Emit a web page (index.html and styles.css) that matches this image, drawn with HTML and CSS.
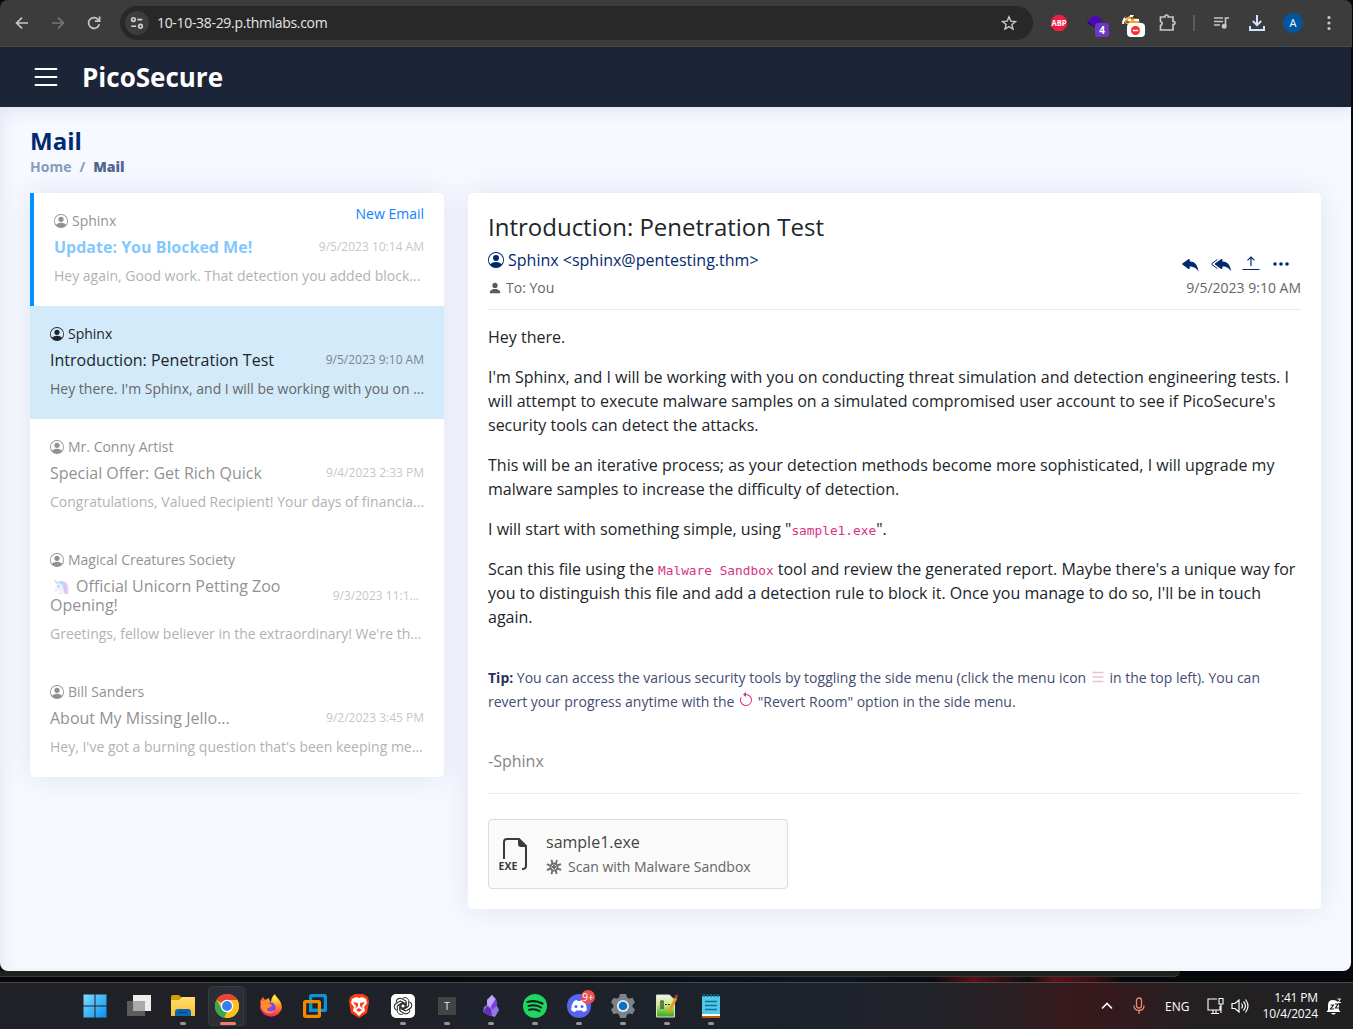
FILE: index.html
```html
<!DOCTYPE html>
<html lang="en">
<head>
<meta charset="utf-8">
<title>PicoSecure - Mail</title>
<link rel="stylesheet" href="styles.css">
</head>
<body>
<svg class="defs" aria-hidden="true">
  <symbol id="person-circle" viewBox="0 0 16 16"><path d="M11 6a3 3 0 1 1-6 0 3 3 0 0 1 6 0z"/><path fill-rule="evenodd" d="M0 8a8 8 0 1 1 16 0A8 8 0 0 1 0 8zm8-7a7 7 0 0 0-5.468 11.37C3.242 11.226 4.805 10 8 10s4.757 1.225 5.468 2.37A7 7 0 0 0 8 1z"/></symbol>
  <symbol id="person" viewBox="0 0 16 16"><path d="M3 14s-1 0-1-1 1-4 6-4 6 3 6 4-1 1-1 1H3zm5-6a3 3 0 1 0 0-6 3 3 0 0 0 0 6z"/></symbol>
  <linearGradient id="winblue" x1="0" y1="0" x2="1" y2="1"><stop offset="0" stop-color="#7ddcff"/><stop offset="1" stop-color="#0a8fee"/></linearGradient>
  <linearGradient id="fold" x1="0" y1="0" x2="0" y2="1"><stop offset="0" stop-color="#ffdf70"/><stop offset="1" stop-color="#fbbf2d"/></linearGradient>
  <radialGradient id="fox" cx=".7" cy=".15" r=".95"><stop offset="0" stop-color="#fff04a"/><stop offset=".4" stop-color="#ff9a28"/><stop offset=".75" stop-color="#ff4050"/><stop offset="1" stop-color="#e5198b"/></radialGradient>
  <linearGradient id="green" x1="0" y1="0" x2="0" y2="1"><stop offset="0" stop-color="#f4f8ed"/><stop offset=".45" stop-color="#c5e97a"/><stop offset="1" stop-color="#35a812"/></linearGradient>
</svg>

<header class="browser">
  <div class="nav">
    <span><svg width="16" height="16" viewBox="0 0 16 16" fill="none" stroke="#c7c7c7" stroke-width="1.7"><path d="M14 8H3M8 2.6 2.6 8 8 13.4"/></svg></span>
    <span><svg width="16" height="16" viewBox="0 0 16 16" fill="none" stroke="#757575" stroke-width="1.7"><path d="M2 8h11M8 2.6 13.4 8 8 13.4"/></svg></span>
    <span><svg width="16" height="16" viewBox="0 0 16 16" fill="none" stroke="#c7c7c7" stroke-width="1.7"><path d="M13.3 9.1A5.4 5.4 0 1 1 12 4.3l1.3 1.5"/><path d="M13.6 1.6v4.6H9"/></svg></span>
  </div>
  <div class="address">
    <span class="site"><svg width="16" height="16" viewBox="0 0 16 16" fill="none" stroke="#d2d2d2" stroke-width="1.6"><circle cx="4.4" cy="4.6" r="1.8"/><path d="M8.3 4.6h5M2.2 11.2h5"/><circle cx="11.5" cy="11.2" r="1.8"/></svg></span>
    <span class="url">10-10-38-29.p.thmlabs.com</span>
    <svg class="star" width="16" height="16" viewBox="0 0 16 16" fill="none" stroke="#c7c7c7" stroke-width="1.4"><path d="m8 1.8 1.8 4.3 4.7.4-3.6 3 1.1 4.6-4-2.5-4 2.5 1.1-4.6-3.6-3 4.7-.4z"/></svg>
  </div>
  <div class="tools">
    <span><svg width="18" height="18" viewBox="0 0 18 18"><path fill="#ed1e45" d="M5.500 1h7L17 5.500v7L12.500 17h-7L1 12.500v-7z"/><text class="abp" x="9" y="12" text-anchor="middle" textLength="15" lengthAdjust="spacingAndGlyphs">ABP</text></svg></span>
    <span><svg width="28" height="28" viewBox="0 0 28 28"><path fill="#210a70" d="m6 14 6-3 9 5-3 5z"/><path fill="#4b09b5" d="m14 6 8 5-8 7-8-6z"/><rect x="14" y="14" width="14" height="14" rx="3" fill="#6c37c2"/><text class="badge-num" x="21" y="25" text-anchor="middle">4</text></svg></span>
    <span><svg width="28" height="28" viewBox="0 0 28 28"><path fill="#f1a43a" d="M7 12q6-10 15-1l1 4H9z"/><path fill="none" stroke="#fff" stroke-width="2" d="M6 15q0-5 4-7m3-1h4m-6 4h3m3 0h5"/><path fill="none" stroke="#242424" stroke-width="1.200" d="M8 9l3-2m5 0 4 2M9 13h3m2-4h5"/><rect x="10" y="14" width="18" height="14" rx="4" fill="#fff"/><circle cx="18.500" cy="21.500" r="4.500" fill="#f92f2f"/><path stroke="#fff" stroke-width="1.500" d="M15.800 21.500h5.400"/></svg></span>
    <span><svg width="20" height="20" viewBox="0 0 20 20" fill="none" stroke="#c7c7c7" stroke-width="1.700"><path d="M3.500 4H8V3q1.600-2 3.200 0v1H16v4.500h1q2 1.500 0 3h-1V17H3.500v-4.500q3.400-2 0-4z"/></svg></span>
    <i></i>
    <span><svg width="18" height="18" viewBox="0 0 18 18" fill="none" stroke="#c7c7c7" stroke-width="1.600"><path d="M2 4h9M2 7.500h9M2 11h6M13.500 12V4H17"/><circle cx="12.200" cy="12.300" r="1.700" fill="#c7c7c7"/></svg></span>
    <span><svg width="18" height="18" viewBox="0 0 18 18" fill="none" stroke="#d3e3fd" stroke-width="2"><path d="M9 1v10M4.800 7 9 11.200 13.200 7M2 12v4h14v-4"/></svg></span>
    <span><b class="avatar">A</b></span>
    <span><svg width="4" height="16" viewBox="0 0 4 16" fill="#c7c7c7"><circle cx="2" cy="2.500" r="1.600"/><circle cx="2" cy="8" r="1.600"/><circle cx="2" cy="13.500" r="1.600"/></svg></span>
  </div>
</header>

<div class="page">
  <div class="brand">
    <svg width="24" height="20" viewBox="0 0 24 20" fill="none" stroke="#fff" stroke-width="1.900" stroke-linecap="round"><path d="M1.500 2h21M1.500 10h21M1.500 18h21"/></svg>
    <span>PicoSecure</span>
  </div>
  <main>
    <h1>Mail</h1>
    <div class="crumbs"><span>Home</span><span>/</span><b>Mail</b></div>
    <div class="columns">
      <section class="card inbox">
        <article class="mail fresh">
          <em>New Email</em>
          <div class="dim">
            <p class="sender"><svg><use href="#person-circle"/></svg>Sphinx</p>
            <div class="subject"><h3>Update: You Blocked Me!</h3><time>9/5/2023 10:14 AM</time></div>
            <p class="preview">Hey again, Good work. That detection you added block...</p>
          </div>
        </article>
        <article class="mail active">
          <p class="sender"><svg><use href="#person-circle"/></svg>Sphinx</p>
          <div class="subject"><h3>Introduction: Penetration Test</h3><time>9/5/2023 9:10 AM</time></div>
          <p class="preview">Hey there. I'm Sphinx, and I will be working with you on ...</p>
        </article>
        <article class="mail"><div class="dim">
          <p class="sender"><svg><use href="#person-circle"/></svg>Mr. Conny Artist</p>
          <div class="subject"><h3>Special Offer: Get Rich Quick</h3><time>9/4/2023 2:33 PM</time></div>
          <p class="preview">Congratulations, Valued Recipient! Your days of financia...</p>
        </div></article>
        <article class="mail"><div class="dim">
          <p class="sender"><svg><use href="#person-circle"/></svg>Magical Creatures Society</p>
          <div class="subject"><h3><svg class="unicorn" viewBox="0 0 16 16"><path fill="#f3a8e7" d="M6 3c6-3 9 2 9.500 5v7H10z"/><path fill="#c87af0" d="M8 2c5 0 6 5 6 13h-3z"/><path fill="#72b7f5" d="M5 3c5-3 7 2 7 6v4H8z"/><path fill="#e9dcfa" d="M4 5c4-2 6 1 6 4l2 6H5l2-4-4 2-2-2z"/><path fill="#47c5d5" d="m1 0 4 4-2 1z"/><circle cx="5.500" cy="7" r=".8" fill="#354060"/></svg>Official Unicorn Petting Zoo<br>Opening!</h3><time class="clipped">9/3/2023 11:1...</time></div>
          <p class="preview">Greetings, fellow believer in the extraordinary! We're th...</p>
        </div></article>
        <article class="mail"><div class="dim">
          <p class="sender"><svg><use href="#person-circle"/></svg>Bill Sanders</p>
          <div class="subject"><h3>About My Missing Jello...</h3><time>9/2/2023 3:45 PM</time></div>
          <p class="preview">Hey, I've got a burning question that's been keeping me...</p>
        </div></article>
      </section>

      <section class="card reader">
        <h2>Introduction: Penetration Test</h2>
        <div class="meta">
          <div>
            <p class="from"><svg><use href="#person-circle"/></svg>Sphinx &lt;sphinx@pentesting.thm&gt;</p>
            <p class="to"><svg><use href="#person"/></svg>To: You</p>
          </div>
          <div class="right">
            <div class="actions">
              <svg viewBox="0 0 16 16"><path d="M5.921 11.900 1.353 8.620a.719.719 0 0 1 0-1.238L5.921 4.100A.716.716 0 0 1 7 4.719V6c1.500 0 6 0 7 8-2.500-4.500-7-4-7-4v1.281c0 .560-.606.898-1.079.620z"/></svg>
              <svg viewBox="0 0 16 16"><path d="M8.021 11.900 3.453 8.620a.719.719 0 0 1 0-1.238L8.021 4.100a.716.716 0 0 1 1.079.619V6c1.500 0 6 0 7 8-2.500-4.500-7-4-7-4v1.281c0 .560-.606.898-1.079.620z"/><path fill="none" stroke="#012970" stroke-width=".8" stroke-linecap="round" d="M4.830 4.600.8 7.560q-.5.500 0 .960l4.030 2.950"/></svg>
              <svg viewBox="0 0 20 20" fill="none" stroke="#012970" stroke-width="1.200"><path d="M1.500 15.500h17M10 12V3M6.500 6.400 10 3l3.500 3.400"/></svg>
              <svg viewBox="0 0 20 20"><circle cx="4" cy="10" r="1.800"/><circle cx="10" cy="10" r="1.800"/><circle cx="16" cy="10" r="1.800"/></svg>
            </div>
            <time>9/5/2023 9:10 AM</time>
          </div>
        </div>
        <div class="body">
          <p>Hey there.</p>
          <p>I'm Sphinx, and I will be working with you on conducting threat simulation and detection engineering tests. I<br>will attempt to execute malware samples on a simulated compromised user account to see if PicoSecure's<br>security tools can detect the attacks.</p>
          <p>This will be an iterative process; as your detection methods become more sophisticated, I will upgrade my<br>malware samples to increase the difficulty of detection.</p>
          <p>I will start with something simple, using "<code>sample1.exe</code>".</p>
          <p>Scan this file using the <code>Malware Sandbox</code> tool and review the generated report. Maybe there's a unique way for<br>you to distinguish this file and add a detection rule to block it. Once you manage to do so, I'll be in touch<br>again.</p>
          <p class="tip"><b>Tip:</b> You can access the various security tools by toggling the side menu (click the menu icon <svg width="16" height="14" viewBox="0 0 16 14" stroke="#e9c3c9" stroke-width="1.700"><path d="M2.500 2.500h11M2.500 7h11M2.500 11.500h11"/></svg> in the top left). You can<br>revert your progress anytime with the <svg width="16" height="16" viewBox="0 0 16 16" fill="#d63384"><path d="M8 3a5 5 0 1 1-4.546 2.914.5.5 0 0 0-.908-.417A6 6 0 1 0 8 2v1z"/><path d="M8 4.466V.534a.25.25 0 0 0-.41-.192L5.230 2.308a.25.25 0 0 0 0 .384l2.360 1.966A.25.25 0 0 0 8 4.466z"/></svg> "Revert Room" option in the side menu.</p>
          <p class="sign">-Sphinx</p>
        </div>
        <div class="attachment">
          <svg class="exe" width="32" height="36" viewBox="0 0 32 36"><path fill="none" stroke="#3b3b3b" stroke-width="2" d="M6 24V7q0-3 3-3h12l7 7v20q0 3-4 3.200"/><path fill="#3b3b3b" d="M20 3v6q0 3 3 3h6z"/><text x="10" y="35" text-anchor="middle">EXE</text></svg>
          <div>
            <p class="file">sample1.exe</p>
            <p class="scan"><svg width="16" height="16" viewBox="0 0 16 16" fill="none" stroke="#707070" stroke-width="1.900"><circle cx="8" cy="8" r="3.500"/><path d="M6.500 5 5.500.8M9.800 5 11 1M5 7 .8 5.200M5 9.500 1 11M11 6.500l4-1.300M11 9.500l4.200 1.300M6.500 11l-1 4.200M9.500 11l1.200 4M8 6v4M6 8h4"/></svg>Scan with Malware Sandbox</p>
          </div>
        </div>
      </section>
    </div>
  </main>
</div>
<div class="wallpaper"><div></div></div>

<footer class="taskbar">
  <div class="apps">
    <span><svg viewBox="0 0 24 24" fill="url(#winblue)"><path d="M.500.500h11v11H.500zM12.500.500h11v11h-11zM.500 12.500h11v11H.500zM12.500 12.500h11v11h-11z"/></svg></span>
    <span><svg viewBox="0 0 24 24"><path fill="#ededed" d="M6 1h18v16H6z"/><path fill="#5c5c5c" d="M0 7h18v15H0z"/><path fill="#aaa" d="M6 7h12v10H6z"/></svg></span>
    <span class="run"><svg viewBox="0 0 24 24"><path fill="#d99a08" d="M0 3q0-2 2-2h6l3 3v4H0z"/><path fill="url(#fold)" d="M0 6h8l3-3h13v19H0z"/><path fill="#0a66b3" d="M4 22v-4q0-3 3-3h10q3 0 3 3v4z"/><path stroke="#064a83" stroke-width="1.500" d="M8 18.500h8"/></svg></span>
    <span class="current"><svg viewBox="0 0 24 24"><circle cx="12" cy="12" r="12" fill="#fbc116"/><path fill="#ea4335" d="M12 12 1.600 6A12 12 0 0 1 22.400 6H12z"/><path fill="#34a853" d="M1.600 6 7 15l5 3-3 5.600A12 12 0 0 1 1.600 6z"/><path fill="#fbc116" d="M12 6h10.400A12 12 0 0 1 12 24l5-9z"/><circle cx="12" cy="12" r="6.300" fill="#fff"/><circle cx="12" cy="12" r="4.900" fill="#397df0"/></svg></span>
    <span><svg viewBox="0 0 24 24"><path fill="url(#fox)" d="M1 7 4 3l2 3 4-2c0 3 2 4 2 4s0-5 4-8c1 4 7 6 7 14a11.300 11.300 0 0 1-22 0c0-3 1-4 0-7z"/><circle cx="11.500" cy="13.500" r="5.200" fill="#8146e8"/><path fill="#ff8b2b" d="M2 7c5 0 7 2 11 4-1 3-4 2-5 4 0 3 5 3 8 1-3 6-13 4-14-4z"/></svg></span>
    <span><svg viewBox="0 0 24 24" fill="none" stroke-width="3.200"><rect x="7.600" y="1.600" width="14.800" height="14.800" rx="1" stroke="#0795d8"/><rect x="1.600" y="7.600" width="14.800" height="14.800" rx="1" stroke="#f38b00"/><path stroke="#0795d8" d="M7.600 9v7.400H15"/></svg></span>
    <span><svg viewBox="0 0 24 24"><path fill="#fa3d14" d="m8 0-5 3-1 5 2 11 8 5 8-5 2-11-1-5-5-3z"/><path fill="#fff" d="m9 3-4 2-1 4 3 4-1 4 3 2 3 3 3-3 3-2-1-4 3-4-1-4-4-2-3 1z"/><path fill="#fa3d14" d="m6 8 5 1v3l-3 3 1-3zM18 8l-5 1v3l3 3-1-3zM9 16l3-2 3 2-3 2z"/></svg></span>
    <span class="run"><svg viewBox="0 0 24 24"><rect width="24" height="24" rx="5" fill="#fff"/><g fill="none" stroke="#222" stroke-width="1"><path id="petal" d="M11.500 4.400c3-2 6.500 0 6.200 3.300v4.400l-3.700 2.200V9.500L9.600 7"/><use href="#petal" transform="rotate(60 12 12)"/><use href="#petal" transform="rotate(120 12 12)"/><use href="#petal" transform="rotate(180 12 12)"/><use href="#petal" transform="rotate(240 12 12)"/><use href="#petal" transform="rotate(300 12 12)"/></g></svg></span>
    <span class="run"><b class="typora">T</b></span>
    <span class="run"><svg viewBox="0 0 24 24"><path fill="#9974e8" d="m13 1 4 4 1 7 2 4-4 7-7-2-5-3 1-5 3-2V6z"/><path fill="#c3a6fb" d="m13 1 3 4-4 8-4-2V6z"/><path fill="#6130b7" d="m8 12 4 3 1 7-4-1-5-3z"/><path fill="#7544d8" d="m17 5 1 7-5 4-1-4z"/></svg></span>
    <span class="run"><svg viewBox="0 0 24 24"><circle cx="12" cy="12" r="12" fill="#1ed760"/><path fill="none" stroke="#17201c" stroke-linecap="round" stroke-width="2.300" d="M4.500 8Q12 5.500 19.500 9.500"/><path fill="none" stroke="#17201c" stroke-linecap="round" stroke-width="2" d="M5.500 12q7-2 12.500 1.500M6 15.800q6-1.600 10.500 1.400"/></svg></span>
    <span class="run discord"><svg viewBox="0 0 24 24"><circle cx="12" cy="12" r="12" fill="#5865f2"/><path fill="#fff" d="M7 7q2-1 3-1l.5 1h3l.5-1q2 0 3 1 3 4 3 9-2 2-4 2l-1-1.500H9L8 18q-2 0-4-2 0-5 3-9z"/><circle cx="9" cy="12.500" r="1.500" fill="#5865f2"/><circle cx="15" cy="12.500" r="1.500" fill="#5865f2"/></svg><em>9+</em></span>
    <span class="run"><svg viewBox="0 0 24 24"><path fill="#7c838a" d="M9 0h6l.9 3.300 2.300 1.400 3.300-.9 2.500 4.700L21.500 11v2l2.500 2.500-2.500 4.700-3.300-.9-2.300 1.400L15 24H9l-.9-3.300-2.300-1.400-3.300.9L0 15.500 2.500 13v-2L0 8.500l2.500-4.700 3.300.9 2.300-1.400z"/><circle cx="12" cy="12" r="6" fill="#e8eef2"/><circle cx="12" cy="12" r="4.300" fill="#0872c4"/></svg></span>
    <span class="run"><svg viewBox="0 0 24 24"><path fill="url(#green)" stroke="#ddd" d="M1.500 1h13l5 5v17h-18z"/><path fill="none" stroke="#333" stroke-width="1.200" d="M6 15V7h2v8M10 10.500h2m1 0h2"/><path stroke="#e89b20" stroke-width="2.800" d="m14 18 7-14"/><path stroke="#a33b35" stroke-width="2.800" d="m20.500 4 1.500-3"/></svg></span>
    <span class="run"><svg viewBox="0 0 24 24"><path fill="#55c7e8" d="M3 2h18v20H3z"/><path fill="#fff" d="M3 20h18v2H3z"/><path fill="#bd5917" d="M3 22h18v2H3z"/><path fill="none" stroke="#09739b" stroke-width="1.600" d="M6 7.500h12M6 11.500h12M6 15.500h12M5 0v3m3.500-3v3M12 0v3m3.500-3v3M19 0v3"/></svg></span>
  </div>
  <div class="tray">
    <svg class="chev" width="12" height="8" viewBox="0 0 12 8" fill="none" stroke="#fff" stroke-width="1.600"><path d="m1 6.500 5-5 5 5"/></svg>
    <svg class="mic" width="12" height="18" viewBox="0 0 12 18" fill="none" stroke="#e58b67" stroke-width="1.300"><rect x="3.500" y="1" width="5" height="10" rx="2.500"/><path d="M1 8.500q0 5 5 5t5-5M6 13.500V17"/></svg>
    <span class="lang">ENG</span>
    <svg class="net" width="17" height="18" viewBox="0 0 17 18" fill="none" stroke="#fff" stroke-width="1.100"><path d="M10 2H1v11h12V9M4 16.500h8M6 13v3M9 13v3M12 1.500h4V7h-4zM14 7v9"/></svg>
    <svg class="vol" width="18" height="16" viewBox="0 0 18 16" fill="none" stroke="#fff" stroke-width="1.200"><path d="M1 5.500h3L8 2v12l-4-3.500H1zM10.500 5.500q2 2.500 0 5M12.500 3.500q4 4.500 0 9M14.500 1.500q5 6.500 0 13"/></svg>
    <div class="clock">1:41 PM<br>10/4/2024</div>
    <svg class="bell" width="16" height="17" viewBox="0 0 16 17"><path fill="#fff" d="M2 12V7q0-5 5-5 6 0 6 6v4l1.500 2H.500zM5 15h5q-2.500 3-5 0z"/><path fill="none" stroke="#202020" stroke-width="1.200" d="M4.500 7h3l-3 4H8M9 6h3l-2.500 4H13"/><path fill="none" stroke="#fff" d="M11.500 1h3L12 4.500h3"/></svg>
  </div>
</footer>
</body>
</html>
```
FILE: styles.css
```css
* { box-sizing: border-box; }
body { margin: 0; width: 1353px; height: 1029px; overflow: hidden; background: #08090e; color: #212529; font: 16px/24px "Open Sans", sans-serif; }
h1, h2, h3, p { margin: 0; font-weight: 400; white-space: nowrap; }
svg { flex: none; }
.defs { position: absolute; width: 0; height: 0; }

.browser { width: 1352px; height: 47px; display: flex; background: #3c3c3c; border-bottom: 1px solid #474747; border-radius: 8px 8px 0 0; padding: 6px 5px 0 4px; }
.nav, .tools { display: flex; height: 34px; }
.nav { width: 116px; }
.nav span, .tools span { width: 36px; display: flex; align-items: center; justify-content: center; }
.address { width: 913px; height: 34px; border-radius: 17px; background: #282828; display: flex; align-items: center; padding: 0 16px 0 5px; }
.site { width: 24px; height: 24px; border-radius: 50%; background: #3c3c3c; display: grid; place-items: center; margin-right: 8px; }
.url { color: #e6e6e6; font-size: 14px; letter-spacing: -.32px; flex: 1; }
.tools { padding-left: 8px; }
.tools i { width: 2px; height: 16px; margin: 9px 8px; background: #5c5c5c; }
.abp { fill: #fff; font: bold 8px "Open Sans", sans-serif; }
.badge-num { fill: #fff; font: bold 10px "Open Sans", sans-serif; }
.avatar { width: 20px; height: 20px; border-radius: 50%; background: #00579f; color: #fff; font: 11px/20px "Open Sans", sans-serif; text-align: center; }

.page { width: 1351px; height: 924px; background: #f6f9ff; border-radius: 0 0 8px 8px; overflow: hidden; display: flex; flex-direction: column; }
.brand { position: relative; z-index: 1; height: 60px; background: #1c2437; box-shadow: 0 2px 20px rgba(1, 41, 112, .1); display: flex; align-items: center; padding-left: 34px; gap: 24px; color: #fff; font-size: 26px; font-weight: 700; }
main { flex: 1; padding: 19px 30px 0; box-shadow: inset 10px 0 20px -10px rgba(1, 41, 112, .1); }
h1 { color: #012970; font-size: 24px; font-weight: 700; line-height: 29px; height: 30px; }
.crumbs { display: flex; gap: 8px; color: #899bbd; font-size: 14px; font-weight: 700; line-height: 21px; height: 37px; }
.crumbs b { color: #51678f; }
.columns { display: flex; gap: 24px; align-items: flex-start; }
.card { background: #fff; border-radius: 5px; box-shadow: 0 0 30px rgba(1, 41, 112, .1); }

.inbox { width: 414px; overflow: hidden; border-top-left-radius: 0; }
.mail { padding: 16px 20px 18px; position: relative; }
.fresh { border-left: 4px solid #0190ff; }
.fresh em { position: absolute; top: 9px; right: 20px; font-style: normal; font-size: 14px; color: #0d83fd; }
.active { background: #d3eafa; }
.dim { opacity: .5; }
.sender { display: flex; align-items: center; gap: 4px; font-size: 14px; }
.sender svg { width: 14px; height: 14px; fill: currentColor; }
.subject { display: flex; justify-content: space-between; align-items: center; margin: 5px 0 7px; }
.subject h3 { font-size: 16px; line-height: 19px; }
.fresh h3 { font-weight: 700; color: #0190ff; }
.subject time { font-size: 12px; line-height: 18px; color: #899097; white-space: nowrap; margin-bottom: 1px; }
.active time { color: #7d858b; }
.subject .clipped { padding-right: 5px; margin-bottom: 0; }
.preview { font-size: 14px; color: #666; }
.unicorn { width: 16px; height: 16px; margin: 0 7px 0 3px; vertical-align: -3px; }

.reader { width: 853px; height: 716px; padding: 19px 20px 20px; }
.reader h2 { font-size: 24px; line-height: 29px; height: 30px; }
.meta { display: flex; justify-content: space-between; height: 68px; border-bottom: 1px solid #e9eaec; }
.from { display: flex; align-items: center; gap: 4px; color: #012970; line-height: 24px; margin-top: 6px; }
.from svg { width: 16px; height: 16px; fill: currentColor; }
.to { display: flex; align-items: center; gap: 4px; font-size: 14px; color: #666; margin-top: 4px; }
.to svg { width: 14px; height: 14px; fill: #5b5b5b; }
.right { text-align: right; }
.actions { display: flex; gap: 10px; height: 24px; margin: 10px 10px 0 0; align-items: center; }
.actions svg { width: 20px; height: 20px; }
.actions svg:not([fill]) { fill: #012970; }
.right time { display: block; font-size: 14px; color: #666; }
.body { padding-top: 15px; height: 484px; border-bottom: 1px solid #e9eaec; }
.body p { margin-bottom: 16px; }
code { font: 12.8px/1 "DejaVu Sans Mono", monospace; color: #d63384; }
.body .tip { margin: 37px 0 35px; font-size: 14px; color: #444c72; }
.tip b { color: #2b315c; }
.tip svg { vertical-align: -1px; }
.body .sign { color: #858585; }
.attachment { width: 300px; height: 70px; margin-top: 25px; border: 1px solid #dcdcdc; border-radius: 4px; background: #fafafa; display: flex; align-items: center; padding-left: 9px; gap: 16px; }
.exe { margin-bottom: 2px; }
.exe text { font: bold 10.5px "Open Sans", sans-serif; fill: #3b3b3b; }
.file { color: #444; margin-bottom: 1px; }
.scan { display: flex; align-items: center; gap: 6px; font-size: 14px; color: #666; }

.wallpaper { height: 11px; background: linear-gradient(90deg, #05070b 0 30%, #0b1420 62%, #090b10 69%, #5b1016 72%, #210d12 75%, #100b0f 76%, #611017 78%, #350c10 81%, #07080c 83%); }
.wallpaper div { width: 1180px; height: 6px; background: #20201f; border-bottom: 1px solid #383838; border-radius: 0 0 7px 0; }

.taskbar { height: 47px; border-top: 1px solid #484848; display: flex; justify-content: space-between; background: linear-gradient(90deg, #202126 0, #1e222a 40%, #1c222b 58%, #22232a 69%, #2c2023 75%, #38191d 79%, #35191d 82%, #242022 88%, #202022 100%); }
.apps { display: flex; padding-left: 73px; }
.apps span { width: 44px; height: 46px; display: flex; justify-content: center; padding-top: 11px; position: relative; }
.apps svg { width: 24px; height: 24px; }
.apps .run::after, .current::after { content: ""; position: absolute; bottom: 4px; left: 19px; width: 6px; height: 3px; border-radius: 2px; background: #969799; }
.apps .current { background: #2c2f36; border: 1px solid #373a40; border-radius: 4px; width: 36px; height: 40px; margin: 3px 5px 3px 3px; padding: 7px 0 0 2px; box-shadow: 3px 0 0 #272a30; }
.apps .current::after { left: 11px; bottom: 0; width: 16px; background: #f17e65; }
.typora { width: 18px; height: 18px; margin-top: 3px; background: #444; color: #d9edf5; font: 10px/18px "Open Sans", sans-serif; text-align: center; }
.discord em { position: absolute; left: 24px; top: 7px; width: 14px; height: 14px; border-radius: 50%; background: #e94e50; color: #fff; font: 10px/14px "Open Sans", sans-serif; text-align: center; }
.tray { display: flex; align-items: center; color: #fff; padding-right: 11px; }
.mic { margin-left: 20px; }
.lang { font-size: 12px; margin: 1px 0 0 20px; }
.net { margin-left: 17px; }
.vol { margin-left: 7px; }
.clock { margin: -1px 0 0 14px; font-size: 12px; line-height: 16px; letter-spacing: -.15px; text-align: right; white-space: nowrap; }
.bell { margin-left: 8px; }
```
